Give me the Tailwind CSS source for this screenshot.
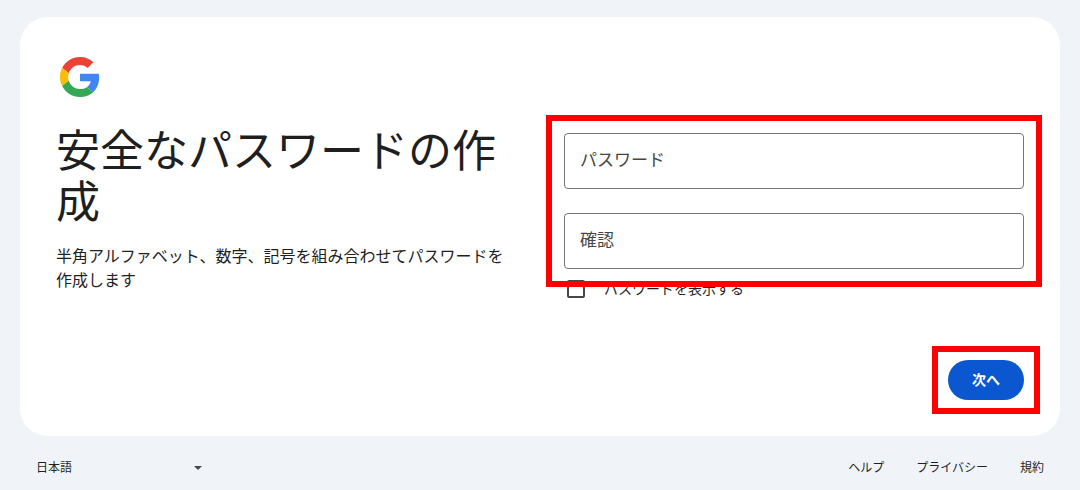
<!DOCTYPE html>
<html lang="ja">
<head>
    <meta charset="UTF-8" />
    <title>安全なパスワードの作成</title>
    <script src="https://cdn.jsdelivr.net/npm/@tailwindcss/browser@4"></script>
</head>
<body class="relative bg-[#f0f4f9] w-[1080px] h-[490px] overflow-hidden font-['Roboto','Noto_Sans_CJK_JP',sans-serif] text-[#1f1f1f]">
    <main class="mx-5 mt-[17px] h-[419px] bg-white rounded-[28px] pt-10 px-9">
        <svg class="w-10 h-10 ml-1" viewBox="0 0 48 48">
            <path fill="#EA4335" d="M24 9.5c3.54 0 6.71 1.22 9.21 3.6l6.85-6.85C35.9 2.38 30.47 0 24 0 14.62 0 6.51 5.38 2.56 13.22l7.98 6.19C12.43 13.72 17.74 9.5 24 9.5z"/>
            <path fill="#4285F4" d="M46.98 24.55c0-1.57-.15-3.09-.38-4.55H24v9.02h12.94c-.58 2.96-2.26 5.48-4.78 7.18l7.73 6c4.51-4.18 7.09-10.36 7.09-17.65z"/>
            <path fill="#FBBC05" d="M10.53 28.59c-.48-1.45-.76-2.99-.76-4.59s.27-3.14.76-4.59l-7.98-6.19C.92 16.46 0 20.12 0 24c0 3.88.92 7.54 2.56 10.78l7.97-6.19z"/>
            <path fill="#34A853" d="M24 48c6.48 0 11.93-2.13 15.89-5.81l-7.73-6c-2.15 1.45-4.92 2.3-8.16 2.3-6.26 0-11.57-4.22-13.47-9.91l-7.98 6.19C6.51 42.62 14.62 48 24 48z"/>
        </svg>
        <div class="flex">
            <div class="w-[452px] shrink-0 pt-[30px]">
                <h1 class="text-[44px] leading-[51px] font-normal">安全なパスワードの作成</h1>
                <p class="mt-4 text-base leading-6">半角アルファベット、数字、記号を組み合わせてパスワードを作成します</p>
            </div>
            <form class="ml-14 w-[460px] pt-9 flex flex-col">
                <input type="password" class="block w-full h-14 pb-[2px] border border-[#747775] rounded px-[15px] text-[17px] placeholder:text-[#444746]" placeholder="パスワード" />
                <input type="password" class="block w-full h-14 pb-[2px] mt-6 border border-[#747775] rounded px-[15px] text-[17px] placeholder:text-[#444746]" placeholder="確認" />
                <label class="flex items-center mt-[11px] ml-[3px] h-[18px] text-sm">
                    <span class="w-[18px] h-[18px] border-2 border-[#444746] rounded-[2px]"></span>
                    <span class="ml-[19px] -mt-[1px]">パスワードを表示する</span>
                </label>
                <button type="button" class="self-end mt-[62px] w-[76px] h-10 rounded-full bg-[#0b57d0] text-white text-sm font-bold">次へ</button>
            </form>
        </div>
    </main>
    <footer class="flex justify-between items-center h-6 mt-5 ml-9 mr-9 text-xs text-[#1f1f1f]">
        <div class="flex items-center w-[166px] justify-between">
            <span>日本語</span>
            <svg class="w-2 h-1" viewBox="0 0 8 4"><path fill="#444746" d="M0 0h8L4 4z"/></svg>
        </div>
        <nav class="flex gap-8">
            <a href="#">ヘルプ</a>
            <a href="#">プライバシー</a>
            <a href="#">規約</a>
        </nav>
    </footer>
    <!-- red annotation boxes on top of the screenshot -->
    <div class="absolute left-[546px] top-[115px] w-[496px] h-[172px] border-[6px] border-[#ff0000]"></div>
    <div class="absolute left-[932px] top-[346px] w-[108px] h-[68px] border-[6px] border-[#ff0000]"></div>
</body>
</html>
